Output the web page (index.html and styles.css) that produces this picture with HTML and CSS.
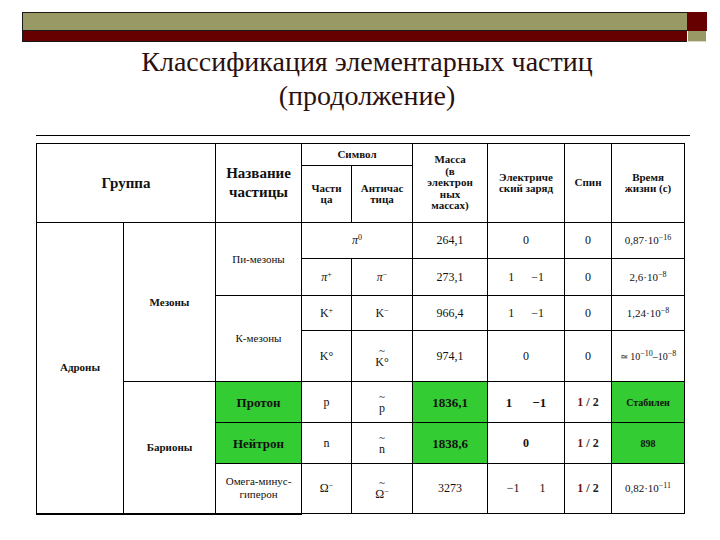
FILE: index.html
```html
<!DOCTYPE html>
<html>
<head>
<meta charset="utf-8">
<link rel="stylesheet" href="styles.css">
</head>
<body>
<div class="slide">
  <div class="topbar">
    <div class="olive"></div>
    <div class="red"></div>
    <div class="red"></div>
    <div class="olive sq"></div>
  </div>
  <p class="title">Классификация элементарных частиц<br>(продолжение)</p>
  <div class="rule"></div>
  <table class="grid">
    <colgroup>
      <col class="c1"><col class="c2"><col class="c3"><col class="c4"><col class="c5"><col class="c6"><col class="c7"><col class="c8"><col class="c9">
    </colgroup>
    <tr class="r-h1">
      <td colspan="2" rowspan="2" class="big">Группа</td>
      <td rowspan="2" class="big">Название<br>частицы</td>
      <td colspan="2" class="hd">Символ</td>
      <td rowspan="2" class="hd">Масса<br>(в<br>электрон<br>ных<br>массах)</td>
      <td rowspan="2" class="hd">Электриче<br>ский заряд</td>
      <td rowspan="2" class="hd">Спин</td>
      <td rowspan="2" class="hd">Время<br>жизни (с)</td>
    </tr>
    <tr class="r-h2">
      <td class="hd">Части<br>ца</td>
      <td class="hd">Античас<br>тица</td>
    </tr>
    <tr class="r-pi0">
      <td rowspan="7" class="b11 thick">Адроны</td>
      <td rowspan="4" class="b11">Мезоны</td>
      <td rowspan="2" class="sm">Пи-мезоны</td>
      <td colspan="2"><i>π</i><sup>0</sup></td>
      <td>264,1</td>
      <td>0</td>
      <td>0</td>
      <td class="sm">0,87·10<sup>−16</sup></td>
    </tr>
    <tr class="r-pip">
      <td><i>π</i><sup>+</sup></td>
      <td><i>π</i><sup>−</sup></td>
      <td>273,1</td>
      <td><span class="pair"><span>1</span><span>−1</span></span></td>
      <td>0</td>
      <td class="sm">2,6·10<sup>−8</sup></td>
    </tr>
    <tr class="r-kp">
      <td rowspan="2" class="sm">К-мезоны</td>
      <td>K<sup>+</sup></td>
      <td>K<sup>−</sup></td>
      <td>966,4</td>
      <td><span class="pair"><span>1</span><span>−1</span></span></td>
      <td>0</td>
      <td class="sm">1,24·10<sup>−8</sup></td>
    </tr>
    <tr class="r-k0">
      <td>K°</td>
      <td><span class="stk"><span class="tl">~</span><span class="lt">K°</span></span></td>
      <td>974,1</td>
      <td>0</td>
      <td>0</td>
      <td class="xs">≃ 10<sup>−10</sup>–10<sup>−8</sup></td>
    </tr>
    <tr class="r-p">
      <td rowspan="3" class="b11 thick">Барионы</td>
      <td class="g b13">Протон</td>
      <td>p</td>
      <td><span class="stk"><span class="tl">~</span><span class="lt">p</span></span></td>
      <td class="g b13">1836,1</td>
      <td class="b13"><span class="pair wide"><span>1</span><span>−1</span></span></td>
      <td class="spin"><span class="s1">1</span> / 2</td>
      <td class="g b10">Стабилен</td>
    </tr>
    <tr class="r-n">
      <td class="g b13">Нейтрон</td>
      <td>n</td>
      <td><span class="stk"><span class="tl">~</span><span class="lt">n</span></span></td>
      <td class="g b13">1838,6</td>
      <td class="b12">0</td>
      <td class="spin"><span class="s1">1</span> / 2</td>
      <td class="g b10">898</td>
    </tr>
    <tr class="r-om">
      <td class="sm thick">Омега-минус-<br>гиперон</td>
      <td>Ω<sup>−</sup></td>
      <td><span class="stk"><span class="tl">~</span><span class="lt">Ω<sup>−</sup></span></span></td>
      <td>3273</td>
      <td><span class="pair wide"><span>−1</span><span>1</span></span></td>
      <td class="spin"><span class="s1">1</span> / 2</td>
      <td class="sm">0,82·10<sup>−11</sup></td>
    </tr>
  </table>
</div>
</body>
</html>
```
FILE: styles.css
```css
html, body { margin: 0; padding: 0; background: #ffffff; }
body { font-family: Tinos, "Times New Roman", serif; }
.slide {
  width: 720px;
  height: 540px;
  overflow: hidden;
}
.topbar {
  margin: 12px 0 0 22px;
  width: 685px;
  display: grid;
  grid-template-columns: 665px 20px;
  grid-template-rows: 19px 11px;
}
.topbar div { box-sizing: border-box; }
.olive { background: #999966; }
.red { background: #660000; }
.topbar > div:nth-child(1) { border: 1px solid #1a1a1a; border-right: none; }
.topbar > div:nth-child(3) { border-left: 1px solid #1a1a1a; border-bottom: 1px solid #1a1a1a; }
.olive.sq { margin: 0 1px 0 1px; border-bottom: 1px solid #d8d8c8; }
.title {
  margin: 0 0 0 22px;
  padding-top: 3px;
  width: 690px;
  font-family: Tinos, "Times New Roman", serif;
  font-weight: normal;
  font-size: 28px;
  line-height: 34px;
  color: #2b1010;
  text-align: center;
}
.rule {
  margin: 22px 0 0 36px;
  width: 654px;
  height: 1px;
  background: #000;
}
.grid {
  margin: 7px 0 0 36px;
  width: 648px;
  border-collapse: collapse;
  table-layout: fixed;
}
.c1 { width: 87px; }
.c2 { width: 92px; }
.c3 { width: 86px; }
.c4 { width: 50px; }
.c5 { width: 61px; }
.c6 { width: 75px; }
.c7 { width: 77px; }
.c8 { width: 47px; }
.c9 { width: 73px; }
.grid td {
  border: 1px solid #000;
  padding: 0;
  text-align: center;
  vertical-align: middle;
  font-family: "Times New Roman", Tinos, serif;
  font-size: 12px;
  line-height: 13px;
  color: #111;
}
.grid td.thick { border-bottom: 2px solid #000; }
.r-h1 { height: 22px; }
.r-h2 { height: 57px; }
.r-pi0 { height: 36px; }
.r-pip { height: 37px; }
.r-kp { height: 35px; }
.r-k0 { height: 51px; }
.r-p { height: 41px; }
.r-n { height: 41px; }
.r-om { height: 50px; }
.grid td.big { font-weight: bold; font-size: 15px; line-height: 19px; }
.grid td.hd { font-weight: bold; font-size: 11px; line-height: 11.5px; }
.grid td.sm { font-size: 11px; line-height: 13px; }
.grid td.xs { font-size: 10px; }
.grid td.b11 { font-weight: bold; font-size: 11px; }
.grid td.b13 { font-weight: bold; font-size: 13px; }
.grid td.b12 { font-weight: bold; font-size: 12px; }
.grid td.b10 { font-weight: bold; font-size: 10px; }
.grid td.g { background: #33cc33; }
.grid td.spin { font-weight: bold; font-size: 12px; color: #222; }
.s1 { color: #6a1212; }
.grid sup { font-size: 8px; line-height: 0; vertical-align: 4px; }
.pair { display: inline-flex; gap: 17px; }
.pair.wide { gap: 20px; }
.stk {
  display: inline-flex;
  flex-direction: column;
  align-items: center;
}
.tl { display: block; font-size: 11px; line-height: 9px; height: 8px; }
.lt { display: block; line-height: 13px; padding-top: 2px; }
```
